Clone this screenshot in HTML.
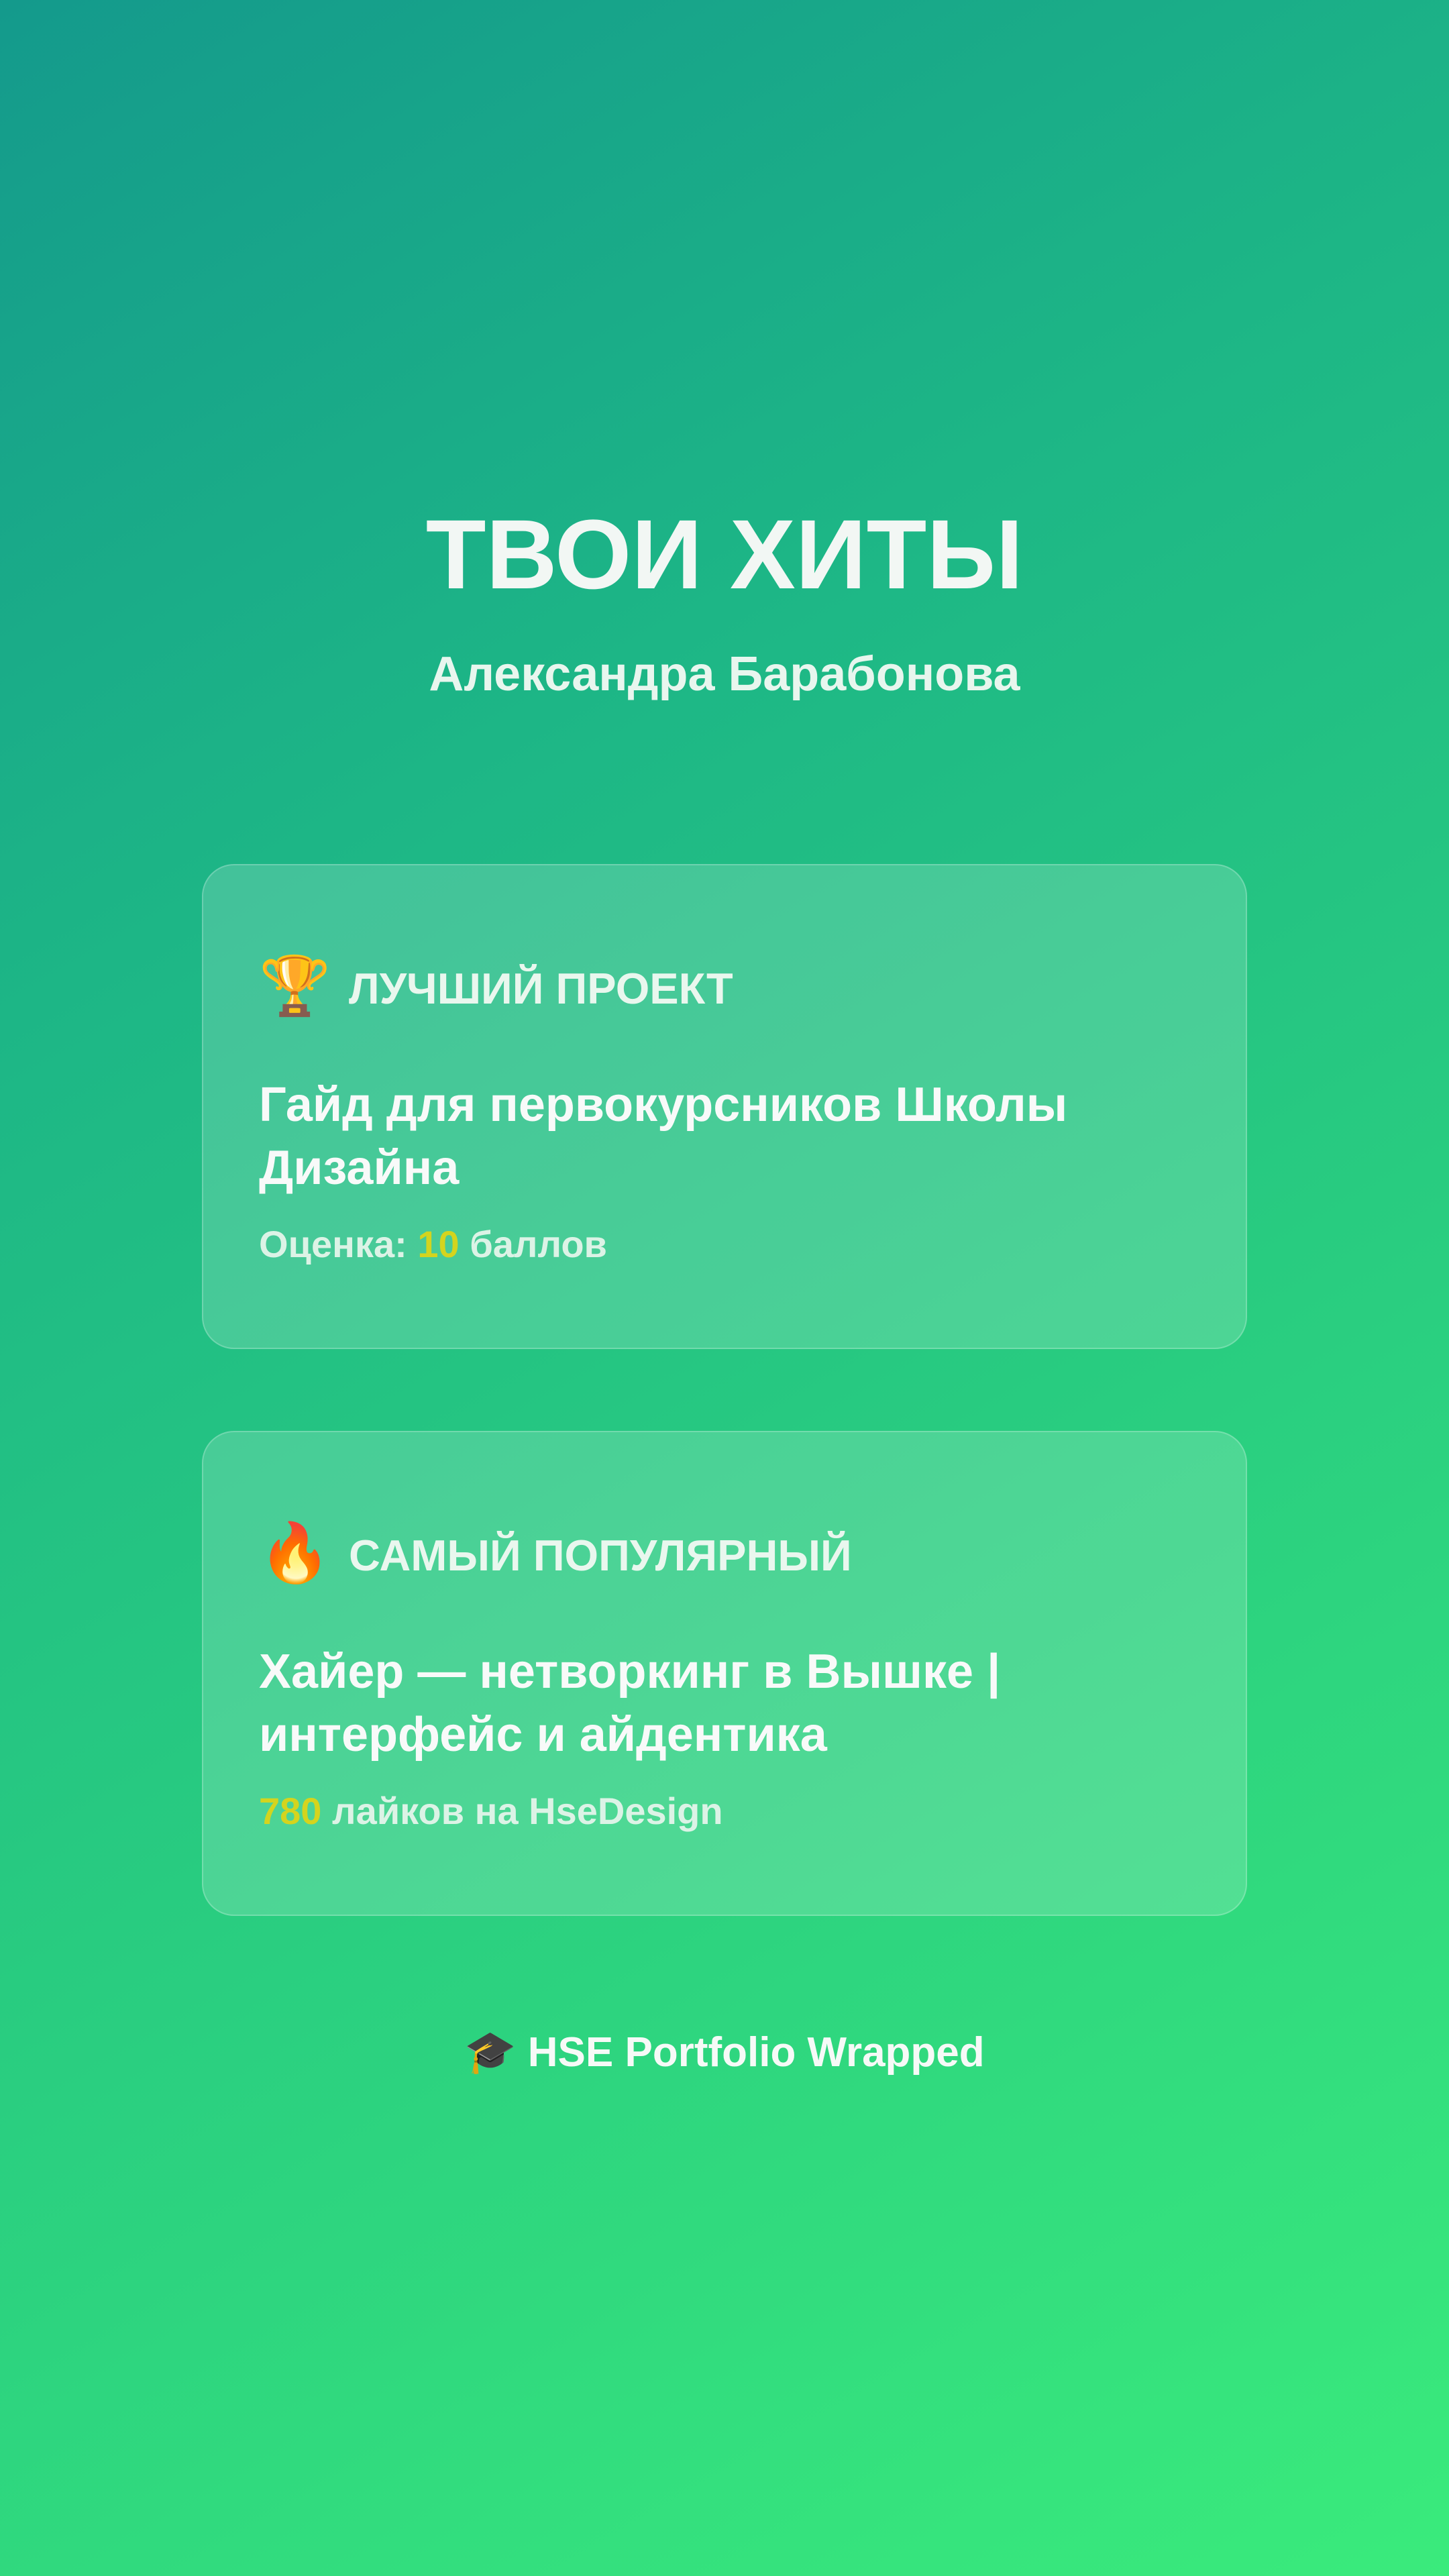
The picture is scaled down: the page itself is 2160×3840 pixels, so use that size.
<!DOCTYPE html>
<html><head><meta charset="utf-8"><style>
html,body{margin:0;padding:0}
body{width:2160px;height:3840px;overflow:hidden;background:linear-gradient(150deg,#149a8c 0%,#1db686 30%,#29cd80 60%,#3aeb7c 100%);font-family:"Liberation Sans","DejaVu Sans",sans-serif;color:#f2f7f4;position:relative}
.t{position:absolute;left:0;width:2160px;text-align:center;font-weight:bold}
.card{position:absolute;left:301px;width:1558px;height:723px;border-radius:48px;background:rgba(255,255,255,0.17);border:2px solid rgba(255,255,255,0.22);box-sizing:border-box}
.lab{position:absolute;left:217px;top:146px;font-size:65px;font-weight:bold;color:#e9f7ee;white-space:nowrap}
.em{position:absolute;left:83px;top:130px;font-size:86px;line-height:100px}
.ti{position:absolute;left:83px;top:310px;font-size:72px;line-height:94px;font-weight:bold;color:#f8faf9;width:1300px}
.sc{position:absolute;left:83px;top:532px;font-size:56px;font-weight:bold;color:#dcf3e6;white-space:nowrap}
.y{color:#d4d41e}
</style></head><body>
<div class="t" style="top:752px;font-size:147px;line-height:150px">ТВОИ ХИТЫ</div>
<div class="t" style="top:963px;font-size:72px;line-height:84px;color:#e8f6ee">Александра Барабонова</div>
<div class="card" style="top:1288px">
<div class="em">🏆</div><div class="lab">ЛУЧШИЙ ПРОЕКТ</div>
<div class="ti">Гайд для первокурсников Школы Дизайна</div>
<div class="sc">Оценка: <span class="y">10</span> баллов</div>
</div>
<div class="card" style="top:2133px">
<div class="em">🔥</div><div class="lab">САМЫЙ ПОПУЛЯРНЫЙ</div>
<div class="ti">Хайер — нетворкинг в Вышке | интерфейс и айдентика</div>
<div class="sc"><span class="y">780</span> лайков на HseDesign</div>
</div>
<div class="t" style="top:3022px;font-size:62px;line-height:76px;color:#f6faf7">🎓 HSE Portfolio Wrapped</div>
</body></html>
